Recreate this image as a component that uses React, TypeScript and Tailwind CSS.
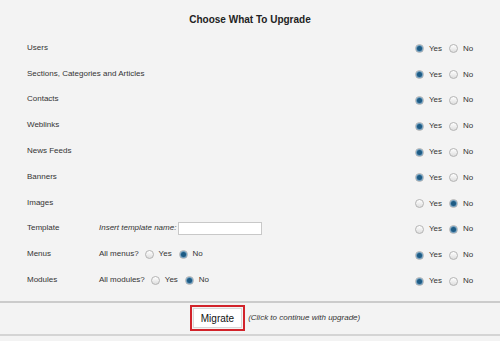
import React from "react";

type Item = {
  label: string;
  value: "yes" | "no";
  extra?: "template" | "menus" | "modules";
};

const items: Item[] = [
  { label: "Users", value: "yes" },
  { label: "Sections, Categories and Articles", value: "yes" },
  { label: "Contacts", value: "yes" },
  { label: "Weblinks", value: "yes" },
  { label: "News Feeds", value: "yes" },
  { label: "Banners", value: "yes" },
  { label: "Images", value: "no" },
  { label: "Template", value: "no", extra: "template" },
  { label: "Menus", value: "yes", extra: "menus" },
  { label: "Modules", value: "yes", extra: "modules" },
];

function Radio({ checked }: { checked: boolean }) {
  return (
    <span className="relative inline-flex w-[9px] h-[9px] shrink-0 items-center justify-center rounded-full border border-[#b4b4b4] bg-gradient-to-b from-[#ffffff] to-[#dedede]">
      {checked && (
        <span className="w-[5px] h-[5px] rounded-full bg-[#1d5b84] shadow-[0_0_0_1px_#6f9cbc]" />
      )}
    </span>
  );
}

function YesNo({ value }: { value: "yes" | "no" }) {
  return (
    <div className="flex items-center">
      <Radio checked={value === "yes"} />
      <span className="ml-[5px] w-[20px]">Yes</span>
      <Radio checked={value === "no"} />
      <span className="ml-[5px]">No</span>
    </div>
  );
}

function Extra({ kind }: { kind: Item["extra"] }) {
  if (kind === "template") {
    return (
      <div className="flex items-center">
        <span className="italic">Insert template name:</span>
        <span className="ml-[2px] w-[84px] h-[13px] bg-white border border-[#c8c8c8]" />
      </div>
    );
  }
  const word = kind === "menus" ? "All menus?" : "All modules?";
  return (
    <div className="flex items-center">
      <span className="mr-[6px]">{word}</span>
      <Radio checked={false} />
      <span className="ml-[5px] w-[20px]">Yes</span>
      <Radio checked={true} />
      <span className="ml-[5px]">No</span>
    </div>
  );
}

export default function App() {
  return (
    <div
      className="w-[500px] h-[341px] bg-[#f3f3f3] text-[#333] text-[8px] flex flex-col overflow-hidden"
      style={{ fontFamily: '"Liberation Sans", Arial, sans-serif' }}
    >
      <h1 className="pt-[12px] h-[35px] text-center text-[10px] font-bold text-[#222]">
        Choose What To Upgrade
      </h1>

      <div className="flex flex-col">
        {items.map((item) => (
          <div
            key={item.label}
            className="grid grid-cols-[99px_316px_85px] items-center h-[25.8px]"
          >
            <span className="pl-[27px] whitespace-nowrap">{item.label}</span>
            <div>{item.extra && <Extra kind={item.extra} />}</div>
            <div className="pt-[2px]">
              <YesNo value={item.value} />
            </div>
          </div>
        ))}
      </div>

      <div className="mt-[8px] border-t-2 border-[#cbcbcb] h-[35px] flex items-center justify-center border-b-2 border-b-[#d4d4d4]">
        <div className="ml-[50px] flex items-center">
          <div className="border-2 border-[#d2232a] p-[1px]">
            <button className="h-[20px] px-[7px] bg-white border border-[#d8d8d8] text-[10px] text-[#111]">
              Migrate
            </button>
          </div>
          <span className="ml-[3px] italic text-[#333]">
            (Click to continue with upgrade)
          </span>
        </div>
      </div>
    </div>
  );
}
